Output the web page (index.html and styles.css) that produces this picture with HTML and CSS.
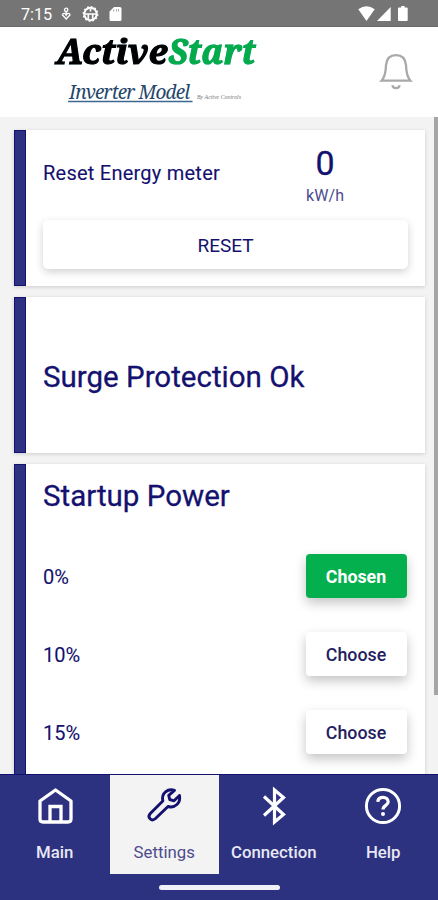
FILE: index.html
```html
<!DOCTYPE html>
<html lang="en">
<head>
<meta charset="utf-8">
<meta name="viewport" content="width=device-width, initial-scale=1">
<title>ActiveStart Settings</title>
<link rel="stylesheet" href="styles.css">
</head>
<body>
<div class="phone">
  <div class="status">
    <span class="time">7:15</span>
    <svg class="st-left" width="66" height="27" viewBox="0 0 66 27">
      <g fill="none" stroke="#fff" stroke-width="1.3">
        <circle cx="7.2" cy="9.8" r="1.7"/>
        <path d="M7.200 11.500v4M3 14.500l4.200 4.500 4.200-4.500M3.500 14.300c1.700-1.800 2.700-.8 3.700 1 1-1.800 2-2.800 3.700-1"/>
        <circle cx="31.500" cy="14" r="6.200" stroke-width="2"/>
        <circle cx="31.500" cy="14" r="7.300" stroke-width="1.200" stroke-dasharray="1.900 1.920"/>
        <path d="M25.500 14h12M31.500 9v2.500M29.300 14.500v5M33.700 14.500v5" stroke-width="1.700"/>
      </g>
      <path fill="#fff" fill-rule="evenodd" d="M55 7h6q1.500 0 1.500 1.500v11q0 1.500-1.500 1.500h-9q-1.500 0-1.500-1.500v-8zM54.500 9.500v2h.7v-2zM57 9v2.500h.6v-2.500zM59.400 9v2.500h.6v-2.500z"/>
    </svg>
    <svg class="st-right" width="52" height="27" viewBox="0 0 52 27">
      <g fill="#fff">
        <path d="M.3 9.200q8.200-6 16.400 0l-8.200 11.800z"/>
        <path d="M19 21l13.700-14v14z"/>
        <path d="M41 7.500h2.200v-1.500h3.400v1.500h2.200q.9 0 .9.900v11.700q0 .9-.9.900h-7.900q-.9 0-.9-.9v-11.700q0-.9 1-.9z"/>
      </g>
    </svg>
  </div>
  <header class="header">
    <svg class="logo" width="210" height="80" viewBox="0 0 210 80">
      <g class="brand">
        <text x="6.500" y="37" textLength="111" lengthAdjust="spacingAndGlyphs">Active</text>
        <text class="start" x="118.500" y="37" textLength="87" lengthAdjust="spacingAndGlyphs">Start</text>
      </g>
      <text class="model" transform="translate(19 72) scale(1 1.08)" textLength="121" lengthAdjust="spacing">Inverter Model</text>
      <path d="M18 74.500h124.500" stroke="#3c6791" stroke-width="1.400"/>
      <text class="by" x="147" y="72" textLength="44" lengthAdjust="spacingAndGlyphs">By Active Controls</text>
    </svg>
    <svg class="bell" width="36" height="40" viewBox="0 0 36 40" fill="none" stroke="#a9a9a9" stroke-width="2.300">
      <path d="M3.500 28.700h29c-4.500-5-4-10-4.500-15.500C27.400 6.500 23.500 3.200 18 3.200S8.600 6.500 8 13.200C7.500 18.700 8 23.700 3.500 28.700z"/>
      <path d="M14.300 33.200q.8 3 3.700 3t3.700-3"/>
    </svg>
  </header>
  <main class="content">
    <div class="cards">
      <section class="card energy">
        <div class="meter">
          <span class="label wide">Reset Energy meter</span>
          <div class="reading"><span class="value">0</span><span class="unit">kW/h</span></div>
        </div>
        <button class="reset">RESET</button>
      </section>
      <section class="card surge"><h2>Surge Protection Ok</h2></section>
      <section class="card startup">
        <h2>Startup Power</h2>
        <div class="option"><span class="label">0%</span><button class="pick chosen">Chosen</button></div>
        <div class="option"><span class="label">10%</span><button class="pick">Choose</button></div>
        <div class="option"><span class="label">15%</span><button class="pick">Choose</button></div>
      </section>
    </div>
    <div class="scroll"><div class="thumb"></div></div>
  </main>
  <nav class="nav">
    <div class="tabs">
      <div class="tab">
        <svg width="40" height="42" viewBox="0 0 40 42" fill="none" stroke="#fff" stroke-width="3.300" stroke-linejoin="round"><path d="M5 15L20.500 4 36 15v18q0 3-3 3H8q-3 0-3-3z"/><path d="M15 36V20.500h11V36" stroke-linejoin="miter"/></svg>
        <span>Main</span>
      </div>
      <div class="tab active">
        <svg width="40" height="42" viewBox="0 0 40 42" fill="none" stroke="#14116f" stroke-width="2.900" stroke-linejoin="round"><path d="M30.500 4.300C24 2 17 7 18.800 15L6.300 27.500c-3.500 4 1.200 8.500 5.200 5L24 20.500c7 2 13-3.500 11.500-11l-5.500 5.300-4.300-1.300-1-4.200z"/></svg>
        <span>Settings</span>
      </div>
      <div class="tab">
        <svg width="40" height="42" viewBox="0 0 40 42" fill="none" stroke="#fff" stroke-width="3.200"><path d="M10 10.500l19.500 18L20.500 36V4l9 7.500L10 29.500"/></svg>
        <span>Connection</span>
      </div>
      <div class="tab">
        <svg width="40" height="42" viewBox="0 0 40 42" fill="none" stroke="#fff" stroke-width="3"><circle cx="20" cy="20" r="16.600"/><path d="M14.800 15.800c.2-3 2.400-4.500 5.200-4.500s5.200 1.700 5.200 4.500c0 3.800-5.200 3.300-5.200 7.700" stroke-width="3.200"/><circle cx="20" cy="28" r="2" fill="#fff" stroke="none"/></svg>
        <span>Help</span>
      </div>
    </div>
    <div class="home"></div>
  </nav>
</div>
</body>
</html>
```
FILE: styles.css
```css
*, *::before { box-sizing: border-box; }
body { margin: 0; font-family: Roboto, "Liberation Sans", sans-serif; color: #14116f; background: #f3f3f3; }
button { font: inherit; color: inherit; border: 0; padding: 0; }
.phone { width: 438px; height: 900px; display: flex; flex-direction: column; overflow: hidden; }

.status { height: 27px; flex: none; background: #757575; border-bottom: 1px solid #686868; display: flex; padding-left: 21px; }
.time { width: 38px; color: #fff; font-size: 16.2px; line-height: 29px; white-space: nowrap; }
.st-right { margin-left: 233px; }

.header { height: 90px; flex: none; background: #fff; display: flex; padding-left: 50px; }
.logo { overflow: visible; }
.brand { font: italic bold 34px "Noto Serif", "DejaVu Serif", serif; fill: #000; stroke: #000; stroke-width: 1.1px; filter: drop-shadow(.6px .6px .4px #9dc7e5); }
.brand .start { fill: #04ab4b; stroke: #04ab4b; }
.model { font: italic 19px "Noto Serif", "DejaVu Serif Condensed", serif; fill: #25466b; }
.by { font: italic 5.5px "Liberation Serif", serif; fill: #777; }
.bell { margin: 25px 0 0 118px; }

.content { flex: 1; min-height: 0; display: flex; overflow: hidden; }
.cards { width: 434px; padding: 13px 9px 0 14px; display: flex; flex-direction: column; gap: 11px; }
.card { flex: none; width: 411px; background: #fff; border-left: 12px solid #2c3180; box-shadow: 0 1px 4px rgba(0,0,0,.16); position: relative; }
.card::before { content: ""; position: absolute; left: -12px; top: 0; bottom: 0; width: 12px; border: 1px solid #14116f; }
.energy, .surge { height: 156px; }
.energy { padding: 0 17px; }
.meter { height: 90px; display: flex; justify-content: space-between; }
.label { font-size: 20px; line-height: 46px; height: 44px; }
.label.wide { line-height: 87px; letter-spacing: .24px; }
.reading { width: 166px; display: flex; flex-direction: column; align-items: center; padding-top: 12px; }
.value { font-size: 34px; line-height: 42px; -webkit-text-stroke: .3px; }
.unit { font-size: 16px; line-height: 23px; letter-spacing: .1px; color: #4d4b8e; }
.reset { display: block; width: 365px; height: 49px; background: #fff; border-radius: 5px; font-size: 19px; line-height: 51px; box-shadow: 0 3px 9px rgba(0,0,0,.18); }
h2 { margin: 0; font-size: 29.5px; font-weight: 400; line-height: 65px; -webkit-text-stroke: .3px; }
.label { -webkit-text-stroke: .1px; }
.surge { padding: 48px 17px; }
.startup { height: 400px; padding: 0 18px 0 17px; }
.startup h2 { height: 90px; }
.option { display: flex; justify-content: space-between; margin-bottom: 34px; }
.pick { width: 101px; height: 44px; background: #fff; border-radius: 4px; font-size: 17.8px; line-height: 46px; font-weight: 500; color: #24205f; padding-right: 1px; box-shadow: 0 5px 12px rgba(0,0,0,.23); }
.pick.chosen { background: #04b04d; color: #fff; font-weight: 700; }
.scroll { width: 4px; }
.thumb { height: 578px; background: #a5a5a5; }

.nav { height: 126px; flex: none; background: #2c3180; border-top: 1px solid #14116f; }
.tabs { height: 99px; display: grid; grid-template-columns: repeat(4, 1fr); }
.tab { display: flex; flex-direction: column; align-items: center; padding-top: 11px; color: #e7e8f3; font-size: 16.8px; font-weight: 500; }
.tab span { line-height: 24px; margin-top: 12px; }
.tab.active { background: #f3f3f3; color: #4d4b8e; font-weight: 400; }
.home { width: 121px; height: 5px; margin: 11px auto 0; border-radius: 3px; background: #f1f1fa; }
```
